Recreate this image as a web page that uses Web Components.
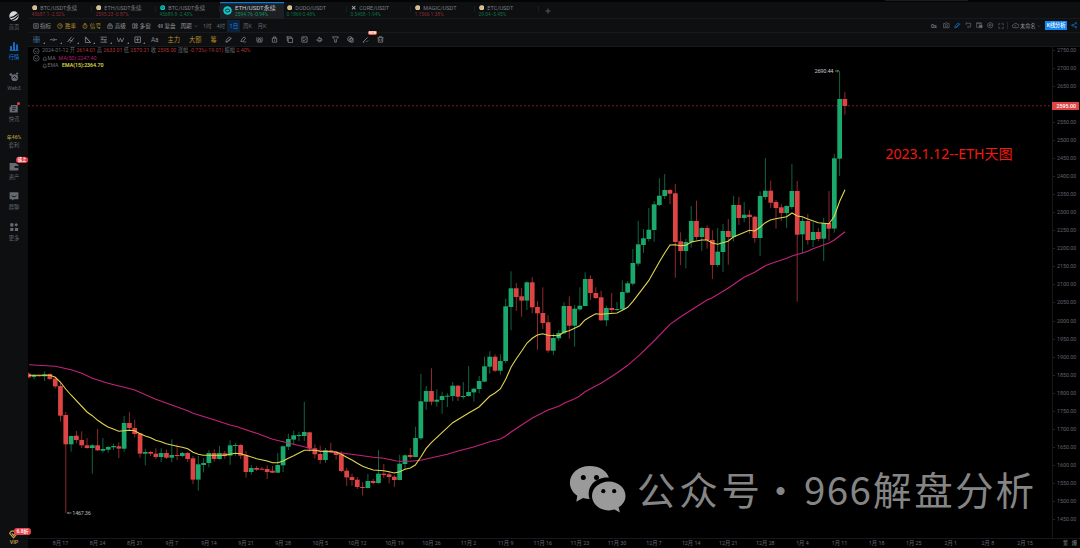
<!DOCTYPE html>
<html lang="zh-CN">
<head>
<meta charset="utf-8">
<title>ETH/USDT</title>
<style>
html,body{margin:0;background:#000}
body{width:1080px;height:548px;overflow:hidden;font-family:Roboto,"Noto Sans CJK SC",sans-serif}
</style>
</head>
<body>
<trade-app></trade-app>
<script>
const define = (name, html, init) => customElements.define(name, class extends HTMLElement {
  constructor() {
    super();
    this.attachShadow({ mode: 'open' });
  }
  connectedCallback() {
    const t = document.createElement('template');
    t.innerHTML = typeof html === 'function' ? html(this) : html;
    this.shadowRoot.replaceChildren(t.content.cloneNode(true));
    if (init) init(this);
  }
});

/* 16-unit line icons */
const ICONS = {
  indicator: '<path d="M2 2h12v12H2zM5 6h6M5 10h6"/>',
  target: '<circle cx="8" cy="8" r="6.3"/><path d="M8 4v4h4"/>',
  signal: '<circle cx="8" cy="9" r="5.5"/><path d="M8 6v3.500M8 11v1M5 1.500h6"/>',
  advanced: '<path d="M2 6h12v8H2zM5 6V2h6v4M6 10h4"/>',
  windows: '<path d="M2 2h5v12H2zM10 2h4v5h-4zM10 10h4v4h-4z"/>',
  replay: '<path d="M7 3L2 8l5 5zM11 3v10M14 3v10"/>',
  down: '<path d="M3 6l5 5 5-5"/>',
  cross: '<path d="M8 0v16M0 8h16" stroke-width="2"/>',
  hline: '<path d="M0 8h5M11 8h5"/><circle cx="8" cy="8" r="2"/>',
  channel: '<path d="M1 13L10 2M6 15l9-11M4 8l8 3"/>',
  triangle: '<path d="M3 2v12h11zM3 2l11 12"/>',
  levels: '<path d="M1 2.500h14M1 8h14M1 13.500h14M5 3v5M11 8v5"/>',
  wave: '<path d="M0 3l3.500 10 4-8 3 8 5-10"/>',
  measure: '<path d="M2 2h12v12H2zM8 4v8M4 8h8"/>',
  pencil: '<path d="M3 9l7-7 4 4-7 7-5 1zM4 14L14 4"/>',
  brush: '<path d="M3 9l6-7 4 3-6 7-5 1zM7 14c3-3 4 2 7-1"/>',
  magnet: '<path d="M2 3v9h4V7h4v5h4V3M5 3l3 4 3-4M3 14h10"/>',
  lock: '<path d="M3 5h10v9H3zM5.500 5V2h5v3M8 8v3"/>',
  crop: '<path d="M5 5h10v10H5zM1 2h11v3M3 1v10h2"/>',
  edit: '<path d="M2 2h12v12H2zM4 9l3 2 5-5M4 5h4"/>',
  eye: '<path d="M3 10c3 5 9 4 11-2M4 8l4-6 1 5 3-2v5H6zM1 9l4 1"/>',
  filter: '<path d="M1 2h14L10 8v6H6V8z"/>',
  hide: '<circle cx="7" cy="7" r="5.500"/><path d="M7 6h7v8H7zM3 10l8-7"/>',
  ruler: '<path d="M2 14L13 3M2 14h4M9 11l2 2 3-3"/>',
  trash: '<path d="M1 4h14M3 4v10h10V4M5 4V1.500h6V4M6 7v4M10 7v4"/>',
  camera: '<path d="M1 4h4l1-2h4l1 2h4v10H1z"/><circle cx="8" cy="9" r="3"/>',
  flag: '<path d="M3 3h11v9H8M3 1v6M9 9l-3 3 3 3"/>',
  layout: '<path d="M1 2h12v5M1 2v11h6M2 4h10"/><path d="M8 8h7v6H8z" fill="currentColor"/>',
  gear: '<path d="M8 1l6 3.500v7L8 15l-6-3.500v-7z"/><circle cx="8" cy="8" r="2.500"/>',
  full: '<path d="M2 6V2h4M10 2h4v4M14 10v4h-4M6 14H2v-4"/>',
  cloud: '<path d="M4 13a3.500 3.500 0 010-7 4.500 4.500 0 018-1 4 4 0 010 8zM6 10l4-3"/>',
  share: '<path d="M12 3L4 8l8 5"/><circle cx="12.500" cy="3" r="2"/><circle cx="3.500" cy="8" r="2"/><circle cx="12.500" cy="13" r="2"/>',
  plus: '<path d="M8 1v14M1 8h14"/>',
  check: '<circle cx="8" cy="8" r="7"/><path d="M4 7l4 3 4-3"/>',
  bell: '<path d="M2 12h12M4 12V7a4 4 0 018 0v5M6 14h4"/>'
};
define('line-icon', el => {
  const s = el.getAttribute('size') || 7;
  return `<style>:host{display:block;flex:none;white-space:normal;width:${s}px;height:${s}px}svg{display:block;width:100%;height:100%;fill:none;stroke:currentColor;stroke-width:1.7}</style>
  <svg viewBox="0 0 16 16">${ICONS[el.getAttribute('name')]}</svg>`;
});

/* Left navigation */
const SIDE = {
  home: '<circle cx="8" cy="8" r="7.500" fill="#d8d9db"/><path d="M2 10c5 1 8-2 12-6M4 14c5 0 8-3 11-7" stroke="#0d0f11" stroke-width="1.800" fill="none"/>',
  market: '<path d="M2 14V8h2.500v6zM6.700 14V2h2.600v12zM11.500 14V5.500H14V14zM1 14h14v1.500H1z"/>',
  web3: '<circle cx="9" cy="9" r="5.500"/><circle cx="3" cy="4" r="2.200"/><circle cx="13" cy="2.500" r="1.800"/><path d="M6 10l3-3 3 4" stroke="#0d0f11" stroke-width="1.500" fill="none"/>',
  news: '<path d="M3 3h11v12H1V6h2z"/><path d="M5 6h6M5 9h6M5 12h4" stroke="#0d0f11" stroke-width="1.200"/>',
  wallet: '<path d="M1 3h11v2h3v10H1z"/><path d="M9 8h6v3H9z" fill="#0d0f11"/>',
  chat: '<path d="M1 2h14v11H8l-3 2v-2H1z"/><path d="M4 7c2 3 6 3 8 0" stroke="#0d0f11" stroke-width="1.500" fill="none"/>',
  more: '<path d="M2 2h5v5H2zM11.500 1.500l3 3-3 3-3-3zM2 9.500h5v5H2zM9.500 9.500h5v5h-5z"/>'
};
define('nav-item', el => {
  const icon = el.getAttribute('icon'), hot = el.hasAttribute('active'), tag = el.getAttribute('tag');
  return `<style>
  :host{display:flex;flex-direction:column;align-items:center;position:relative;width:28px;color:${hot ? '#1683ea' : '#62656d'};font-size:5.3px;line-height:8px}
  svg{width:10px;height:10px;display:block;margin-bottom:2px;fill:${hot ? '#1683ea' : '#666a73'}}
  b{font-weight:500;color:#b8953f;font-size:5px}
  i{position:absolute;left:16px;top:-3.500px;width:12px;height:6px;border-radius:3px;background:#e93d45;color:#fff;font:500 4.500px/6px Roboto,"Noto Sans CJK SC",sans-serif;text-align:center}
  u{position:absolute;left:17px;top:-.500px;width:3px;height:3px;border-radius:50%;background:#e93d45}
  </style>${icon ? `<svg viewBox="0 0 16 16">${SIDE[icon]}</svg>` : '<b>年46%</b>'}<span><slot></slot></span>${tag ? `<i>${tag}</i>` : ''}${el.hasAttribute('dot') ? '<u></u>' : ''}`;
});
define('side-nav', `<style>
  :host{display:flex;flex-direction:column;background:#0d0f11;width:28px;height:548px;box-sizing:border-box;padding-top:8.500px;border-top:2px solid #050606}
  nav-item{height:30.700px}
  nav-item[text]{height:27.500px}
  .vip{margin-top:auto;position:relative;height:20px;text-align:center;color:#c6a24a;font:500 5.500px/8px Roboto,sans-serif}
  .vip svg{display:block;width:9px;height:9px;margin:2px auto -1px 9px}
  .vip i{position:absolute;left:14px;top:0;width:17px;height:6.500px;background:#e8434c;border-radius:3px;color:#fff;font:500 5px/6.500px Roboto,"Noto Sans CJK SC",sans-serif}
  </style>
  <nav-item icon="home">首页</nav-item><nav-item icon="market" active>行情</nav-item>
  <nav-item icon="web3">Web3</nav-item><nav-item icon="news" dot>快讯</nav-item>
  <nav-item text>套利</nav-item><nav-item icon="wallet" tag="链上">资产</nav-item>
  <nav-item icon="chat">群聊</nav-item><nav-item icon="more">更多</nav-item>
  <div class="vip"><svg viewBox="0 0 16 16" fill="none" stroke="#c6a24a" stroke-width="2"><path d="M4 2h8l3 4-7 8-7-8zM5 6l3 4 3-4"/></svg>VIP<i>6.8折</i></div>`);

/* Market tabs */
const COIN = {
  gold: '<circle cx="8" cy="8" r="7.500" fill="#d9d4c8"/><circle cx="8" cy="8" r="5" fill="#e0ad52"/><path d="M8 4v8" stroke="#f3e3bd" stroke-width="1.500"/>',
  cyan: '<circle cx="8" cy="8" r="7.500" fill="#12c9c9"/><path d="M4 9c0-4 6-5 7-2M12 7c0 4-6 5-7 2" fill="none" stroke="#063d40" stroke-width="1.800"/>',
  x: '<path d="M3 3l10 10M13 3L3 13" stroke="#a9abb0" stroke-width="3"/>'
};
define('market-tab', el => {
  const on = el.hasAttribute('active'), up = el.getAttribute('tone') === 'g';
  return `<style>
  :host{display:block;box-sizing:border-box;width:64px;height:17px;padding:2px 0 0 ${on ? 4 : 3.5}px;position:relative;${on ? 'background:#1c2024;box-shadow:inset 0 1.200px #0b7bd8' : ''}}
  :host::after{content:"";position:absolute;right:.500px;top:4px;height:6px;border-right:1px solid #1b1d20}
  div{display:flex;align-items:center;height:7px;font-size:${on ? 6 : 5.5}px;color:${on ? '#c5c8cc' : '#7a7d82'};white-space:nowrap}
  svg{width:${on ? 9 : 5.4}px;height:${on ? 9 : 5.4}px;margin:${on ? '5px 3px 0 -1px' : '0 3.4px 0 0'};flex:none}
  p{margin:0;padding-left:${on ? 11 : 0}px;font-size:4.85px;line-height:7px;color:${up ? (on ? '#12925b' : '#0e7048') : '#8c2c30'};white-space:pre}
  </style><div><svg viewBox="0 0 16 16">${COIN[el.getAttribute('coin')]}</svg><span><slot></slot></span></div><p>${el.getAttribute('quote')}</p>`;
});
define('tab-strip', `<style>
  :host{display:flex;align-items:flex-start;height:19px;box-sizing:border-box;padding-top:2px;background:linear-gradient(#1b1c1e,#1b1c1e) 857px 0/83px 1px no-repeat,linear-gradient(#030404 2px,#0d0f11 2px);border-bottom:1px solid #17191c;color:#777}
  line-icon{margin:6px 0 0 5.500px}
  </style>
  <market-tab coin="gold" tone="r" quote="45687.1 -2.52%">BTC/USDT永续</market-tab>
  <market-tab coin="gold" tone="r" quote="2595.23 -0.87%">ETH/USDT永续</market-tab>
  <market-tab coin="cyan" tone="g" quote="45689.8 -2.43%">BTC/USDT永续</market-tab>
  <market-tab coin="cyan" tone="g" active quote="2594.76 -0.94%">ETH/USDT永续</market-tab>
  <market-tab coin="gold" tone="g" quote="0.1869 0.48%" style="margin-left:-1px">DODO/USDT</market-tab>
  <market-tab coin="x" tone="g" quote="0.5458 -1.94%">CORE/USDT</market-tab>
  <market-tab coin="gold" tone="r" quote="1.1566 1.38%">MAGIC/USDT</market-tab>
  <market-tab coin="gold" tone="g" quote="29.04 -5.45%">ETC/USDT</market-tab>
  <line-icon name="plus" size="6"></line-icon>`);

/* Period bar */
define('period-bar', `<style>
  :host{display:flex;align-items:center;height:14px;box-sizing:border-box;background:#0d0f11;border-bottom:1px solid #17191c;padding-left:4.500px;font-size:5.600px;line-height:10px;color:#92959b;white-space:nowrap}
  span{display:flex;align-items:center;gap:1.500px;width:24.900px;flex:none}
  .gold{color:#b68d2c}.dim{color:#63666c}
  .on{background:#0d2238;color:#1c86e4;justify-content:center;height:12px;width:13px;margin-right:2.500px}
  .right{display:flex;align-items:center;width:149px;margin-left:auto;color:#686b71}
  .right>*{width:auto;flex:none}
  .right .btn{display:block;background:#1386f2;color:#fff;font-size:5.200px;font-weight:500;width:22px;height:8.500px;line-height:8.500px;text-align:center}
  .right .sep{width:1px;height:7px;background:#24272b}
  .tools{display:flex;align-items:center;gap:4.500px;margin-right:3px}
  </style>
  <span><line-icon name="indicator" size="6"></line-icon>指标</span>
  <span class="gold"><line-icon name="target" size="6"></line-icon>胜率</span>
  <span class="gold"><line-icon name="signal" size="6"></line-icon>信号</span>
  <span><line-icon name="advanced" size="6"></line-icon>高级</span>
  <span><line-icon name="windows" size="6"></line-icon>多窗</span>
  <span style="width:23.500px"><line-icon name="replay" size="6"></line-icon>复盘</span>
  <span style="width:22.500px;gap:2px">周期<line-icon name="down" size="4"></line-icon></span>
  <span class="dim" style="width:13.500px">1时</span><span class="dim" style="width:11px">4时</span>
  <span class="on">1日</span><span class="dim" style="width:14.500px">周K</span><span class="dim" style="width:12px">月K</span>
  <div class="right"><span style="width:12px;color:#9a9da2;font-size:5.400px">0s</span>
  <div class="tools"><line-icon name="camera" size="6.5"></line-icon><line-icon name="pencil" size="6.5" style="color:#157bd0"></line-icon><line-icon name="flag" size="6.5"></line-icon><line-icon name="layout" size="6.5"></line-icon><line-icon name="gear" size="6.5"></line-icon><line-icon name="full" size="6"></line-icon></div>
  <i class="sep"></i><line-icon name="cloud" size="7" style="margin:0 1px 0 4px"></line-icon><span style="font-size:5.200px;color:#9699a0;margin-right:1.500px">未命名</span><line-icon name="down" size="4" style="margin-right:4px"></line-icon><span class="btn">K线分析</span><line-icon name="share" size="6.5" style="color:#1872bd;margin-left:3.500px"></line-icon></div>`);

/* Drawing tools */
define('draw-bar', () => {
  const cells = [['cross', 17], ['hline', 17], ['channel', 16.5], ['triangle', 16.5], ['levels', 17], ['wave', 17], ['measure', 16]]
    .map(([n, w], i) => `<span style="width:${w}px" class="m ${i ? '' : 'sel'}"><line-icon name="${n}" size="7.4"></line-icon></span>`).join('');
  const rest = ['pencil', 'brush', 'magnet', 'lock', 'crop', 'edit', 'eye', 'filter', 'hide', 'ruler', 'trash']
    .map(n => `<span style="width:15.200px"><line-icon name="${n}" size="7"></line-icon>${n === 'ruler' ? '<b>NEW</b>' : ''}</span>`).join('');
  return `<style>
  :host{display:flex;align-items:center;height:14px;box-sizing:border-box;background:#0d0f11;border-bottom:1px solid #17191c;padding-left:5px;color:#868990;font-size:6.300px}
  span{position:relative;flex:none;display:block}
  .m::after{content:"";position:absolute;right:5px;bottom:-1px;border:1px solid transparent;border-right-color:#777;border-bottom-color:#777}
  .sel{color:#1e5c9c}.sel line-icon{background:#252b33}
  .gold{color:#b68d2c}
  b{position:absolute;left:6px;top:-5px;width:9px;height:4px;border-radius:2px;background:#f05a36;color:#fff;font:700 3.500px/4px Roboto,sans-serif;text-align:center}
  </style>${cells}<span style="width:17.500px;padding-left:1px;box-sizing:border-box">Aa</span><span class="gold" style="width:21.500px">主力</span><span class="gold" style="width:21.500px">大额</span><span class="gold" style="width:14.800px">筹</span>${rest}`;
});

/* Candles: colour, high, body top, body bottom, low, in thirds of a pixel below each segment's base */
const SEGMENTS = [[1050, `r67,71,82,84 g73,75,81,88 r75,76,79,80 g64,73,79,93 r70,72,87,90 r80,86,109,116 r95,108,197,215 r186,195,283,489 g257,258,283,305 r243,257,270,280 r244,270,286,294 r264,286,294,296 g282,286,294,371 r236,286,301,303 g264,297,302,308 g288,291,299,308 g281,288,292,300 r277,289,296,324 g198,219,296,305 r187,219,234,240 r209,234,252,262 r249,250,311,323 g297,306,311,346 r303,306,311,318 r295,311,321,327 g295,309,321,336 r299,309,323,327 g268,315,323,337 r283,315,318,330 g306,309,318,321 r306,309,327,336 r318,325,389,402 g318,343,389,422 g324,339,345,367 g300,309,339,352 r298,309,327,335 g288,309,327,329 r303,310,318,326 g271,286,317,344 g279,285,288,319 r282,285,317,327 r303,315,366,383 g345,354,366,374 r348,354,359,363`],
[1140, `r261,266,269,270 r256,267,276,297 r258,272,278,279 g219,255,278,279 g196,199,256,276 g161,177,200,210 g152,166,179,194 g155,165,168,184 g65,156,168,183 r155,157,205,215 r193,205,223,236 r197,222,240,251 g204,210,240,249 r188,211,216,220 r213,215,225,239 r214,223,273,276 r263,272,292,318 r281,291,300,317 r291,299,321,327 r306,321,324,346 g282,303,324,325 r297,303,309,312 g211,281,309,311 r252,281,285,294 r276,283,291,310 r285,290,300,321 g224,251,300,301 g224,226,252,269 r204,225,231,236 g140,174,231,232`],
[750, `g371,454,565,570 g408,423,455,479 r355,423,455,466 g418,449,455,470 g425,438,450,491 g430,437,440,471 g396,407,438,453 r405,407,440,453 g396,438,441,448 g348,426,438,440 g413,416,427,455 g378,393,417,430 g320,349,395,397 g304,320,350,371 r313,320,362,366 g313,333,362,374 g146,169,333,340 g64,115,171,241 r99,115,141,182 r114,139,152,200 g94,97,152,180 r82,97,172,190 r153,171,190,299 r112,189,219,237 r196,217,302,308 g250,264,302,315 g241,249,265,273 g157,168,250,252 r139,168,227,266 g165,176,227,290 g112,167,178,182 g67,87,168,169 r76,87,129,150 r112,129,144,147 r122,142,211,213 g167,174,211,229 r129,174,180,188 g156,177,180,183`],
[420, `g421,456,508,511 g423,430,458,460 g327,369,431,437 g243,313,371,378 g267,295,315,338 g204,269,297,304 g183,193,270,305 g115,167,195,198 g102,150,168,177 r147,150,161,193 r132,160,306,413 r277,304,333,375 g297,306,333,385 g198,243,307,323 r182,243,291,299 g261,264,291,333 r256,264,300,326 r271,300,375,417 g264,335,375,381 g252,273,336,396 r237,273,291,374 g168,195,291,305 r171,195,234,255 g186,224,234,246 r210,224,231,281 r228,230,294,308 g154,168,294,348 g54,152,171,179 r122,152,188,204 r180,186,204,266 r192,202,219,243 g196,198,219,264 g72,153,201,208 r123,153,284,485 g232,243,283,340 r222,243,300,314 g246,276,300,321 r264,276,297,303 g234,249,296,363 r153,249,266,302 g42,55,266,278 g-207,-123,56,108 r-144,-123,-102,-76`]];

/* Average lines: origin of each run, then points in thirds of a pixel */
const EMA = [[20,350,'27,76 90,76 106,82 121,96 137,117 153,135 201,186 217,197 233,211 248,221 264,231 280,237 296,244 312,242 328,241 344,242 360,251 376,258 392,263 407,271 423,275 439,281 455,285 471,289 487,292 503,296 519,307 535,313 550,316 614,316 630,313 646,310 662,311'],
[240,380,'18,226 50,236 82,243 98,248 113,248 129,243 145,235 161,227 177,219 193,211 224,211 240,214 288,216 304,223 320,232 336,240 352,250 368,259 384,265 400,270 431,272 447,275 463,279 479,275 495,268'],
[400,250,'31,654 46,645 62,622 78,596 94,578 158,518 205,490 237,471 269,439 285,429 301,417 317,388 333,352 349,326 365,303 381,279 397,265 412,255 428,251 444,256 476,257 492,246 508,242 539,227 555,210 571,200 587,191'],
[600,140,'3,523 51,519 67,511 83,502 98,485 115,463 146,422 178,366 194,339 210,315 226,314 242,317 258,316 274,306 305,300 321,300 337,309 353,313 368,308 384,304 400,291 448,271 464,273 480,262 496,248 511,240 527,236 560,230 576,219 592,228 607,230 623,237 655,248 687,251 703,229 719,184 735,149']];
const MA = [[20,350,'27,44 106,49 153,59 185,70 217,85 264,100 312,112 344,120 407,148 455,165 503,182 519,190 582,209 630,225 655,231'],
[240,380,'0,143 50,160 98,178 145,189 193,200 224,210 256,214 304,219 352,225 400,232 431,235 470,243'],
[400,250,'0,634 30,634 62,631 142,613 174,603 221,591 269,575 301,567 317,558 333,546 397,504 444,480 476,469 492,460 524,446 539,438 555,425 587,408 603,400 651,369 683,346 720,314'],
[600,140,'165,600 210,553 242,530 321,480 337,473 384,445 432,412 464,397 496,377 511,371 560,355 576,348 607,339 623,334 639,326 687,309 703,300 735,275']];
const path = runs => runs.map(([x, y, pts]) => pts.split(' ').map(p => {
  const [a, b] = p.split(',').map(Number);
  return (x + a / 3).toFixed(1) + ',' + (y + b / 3).toFixed(1);
}).join(' ')).join(' ');

define('candle-chart', () => {
  let i = 0, out = '';
  for (const [base, list] of SEGMENTS) for (const c of list.split(' ')) {
    const [h, t, b, l] = c.slice(1).split(',').map(v => (base + +v) / 3), x = 28.7 + 5.3 * i++;
    const red = c[0] === 'r';
    out += `<path d="M${x.toFixed(1)} ${h.toFixed(1)}V${l.toFixed(1)}" stroke="${red ? '#8c2a2b' : '#0f6442'}"/><rect x="${(x - 2.35).toFixed(1)}" y="${t.toFixed(1)}" width="4.700" height="${Math.max(1, b - t).toFixed(1)}" fill="${red ? '#df4445' : '#1aa86c'}"/>`;
  }
  return `<style>:host{display:block;overflow:hidden}svg{display:block}text{font-family:Roboto,"Noto Sans CJK SC",sans-serif}</style>
  <svg width="1024" height="492" viewBox="28 46 1024 492" fill="none">
  <path d="M28 105.800H1052" stroke="#7a2426" stroke-width="1" stroke-dasharray="1.800 2.200"/>
  ${out}
  <polyline points="${path(MA)}" stroke="#c4227c" stroke-width="1.100"/>
  <polyline points="${path(EMA)}" stroke="#e0d64e" stroke-width="1.100"/>
  <text x="814.500" y="73" font-size="5.600" fill="#c4c6c8" textLength="19">2690.44</text><path d="M835 71h3.500m-1.200-1.200l1.200 1.200-1.200 1.200" stroke="#aaa" stroke-width=".7"/>
  <path d="M71.500 513H67.500m1.200-1.200L67.500 513l1.200 1.200" stroke="#aaa" stroke-width=".7"/><text x="72.300" y="515" font-size="5.600" fill="#b4b6b8" textLength="18.500">1467.36</text>
  <text x="885.500" y="159" font-size="14" fill="#f5180c" textLength="127" lengthAdjust="spacingAndGlyphs" style="font-family:'Noto Sans','Noto Sans CJK SC',sans-serif">2023.1.12--ETH天图</text>
  <g fill="#9a9a9a"><path d="M589.600 466c-10.900 0-19.700 7.400-19.700 16.700 0 5.300 2.900 9.900 7.400 13l-1 6 6.700-3.600c2.200.6 4.500 1 6.600 1-4-13 7-22.500 19.300-21.400-1.800-7-9.700-11.700-19.300-11.700z"/><path d="M609 481.400c-9.300 0-17 6.400-17 14.500 0 8 7.700 14.500 17 14.500 1.900 0 3.800-.3 5.500-.8l5.400 2.900-1.300-5.200c4.200-2.700 6.900-6.700 6.900-11.400 0-8.100-7.400-14.500-16.500-14.500z"/></g>
  <g fill="#000"><circle cx="583.300" cy="477.500" r="2.500"/><circle cx="596.500" cy="477.500" r="2.500"/><circle cx="603.300" cy="491.200" r="2.100"/><circle cx="614.200" cy="491.200" r="2.100"/></g>
  <g fill="#858585" font-size="38.500" style="font-weight:400"><text x="637 679.300 721.500" y="505">公众号</text><text x="761.500" y="505" font-size="38" style="font-family:'Noto Sans CJK SC',sans-serif">·</text><text x="804 826.800 849.500" y="505" style="font-family:'Noto Sans CJK SC',sans-serif">966</text><text x="873 914.200 955 995.500" y="505">解盘分析</text></g>
  </svg>`;
});

define('chart-legend', `<style>
  :host{display:grid;grid-auto-rows:7.600px;font-size:5.250px;line-height:7.600px;color:#6c6f76}
  div{display:flex;align-items:center;white-space:pre}
  line-icon{margin-right:2.500px}b{font-weight:400;color:#b23639}.ma{color:#b51f73;margin-left:3px}.ema{color:#e8e04d;margin-left:3.500px;font-weight:500}
  line-icon[name=bell]{margin:0}
  </style>
  <div><line-icon name="check" size="6.5"></line-icon><span>2024-01-12 开 <b>2614.01</b> 高 <b>2633.01</b> 低 <b>2570.21</b> 收 <b>2595.00</b> 涨幅 <b>-0.73%(-19.01)</b> 振幅 <b>2.40%</b></span></div>
  <div><line-icon name="check" size="6.5"></line-icon><line-icon name="bell" size="5.5"></line-icon><span>MA</span><span class="ma">MA(50):2247.40</span></div>
  <div style="padding-left:9px"><line-icon name="bell" size="5.5"></line-icon><span>EMA</span><span class="ema">EMA(15):2364.70</span></div>`);

define('price-axis', () => {
  let s = '';
  for (let p = 2750; p >= 1450; p -= 50) s += `<li>${p === 2600 ? '' : p + '.00'}</li>`;
  return `<style>
  :host{display:block;position:relative;box-sizing:border-box;border-left:1px solid #17181b;font-size:5.300px;color:#62646c;background:#000}
  ul{list-style:none;margin:-6.200px 0 0;padding:0}
  li{height:18.060px;line-height:18.060px;padding-left:4px;position:relative}
  li::before{content:"";position:absolute;left:0;top:9px;width:2px;height:1px;background:#222428}
  b{position:absolute;left:-1px;top:54.500px;width:27px;height:8.500px;box-sizing:border-box;padding-left:4.500px;background:#df4445;color:#fff;font-weight:500;line-height:8.500px}
  </style><ul>${s}</ul><b>2595.00</b>`;
});
define('time-axis', () => {
  const d = '8月 17,8月 24,8月 31,9月 7,9月 14,9月 21,9月 28,10月 5,10月 12,10月 19,10月 26,11月 2,11月 9,11月 16,11月 23,11月 30,12月 7,12月 14,12月 21,12月 28,1月 4,1月 11,1月 18,1月 25,2月 1,2月 8,2月 15'.split(',');
  return `<style>
  :host{display:flex;box-sizing:border-box;border-top:1px solid #17181b;padding-left:14px;font-size:5.300px;line-height:9px;color:#6a6c74;background:#000}
  span{width:37.100px;flex:none;text-align:center}
  em{font-style:normal;margin-left:auto;padding-right:3px;color:#85878d;word-spacing:2px}
  </style>${d.map(t => `<span>${t}</span>`).join('')}<em>筹 爆</em>`;
});
define('trade-app', `<style>
  :host{display:grid;grid-template-columns:28px 1024px 28px;grid-template-rows:19px 14px 14px 491px 10px;width:1080px;height:548px;background:#000;overflow:hidden}
  side-nav{grid-row:1/-1;z-index:1}
  tab-strip,period-bar,draw-bar,time-axis{grid-column:2/-1}
  .plot{position:relative;margin-top:-1px}
  draw-bar{z-index:1}
  chart-legend{position:absolute;left:5px;top:1px}
  </style>
  <side-nav></side-nav><tab-strip></tab-strip><period-bar></period-bar><draw-bar></draw-bar>
  <div class="plot"><candle-chart></candle-chart><chart-legend></chart-legend></div><price-axis></price-axis><time-axis></time-axis>`);
</script>
</body>
</html>
